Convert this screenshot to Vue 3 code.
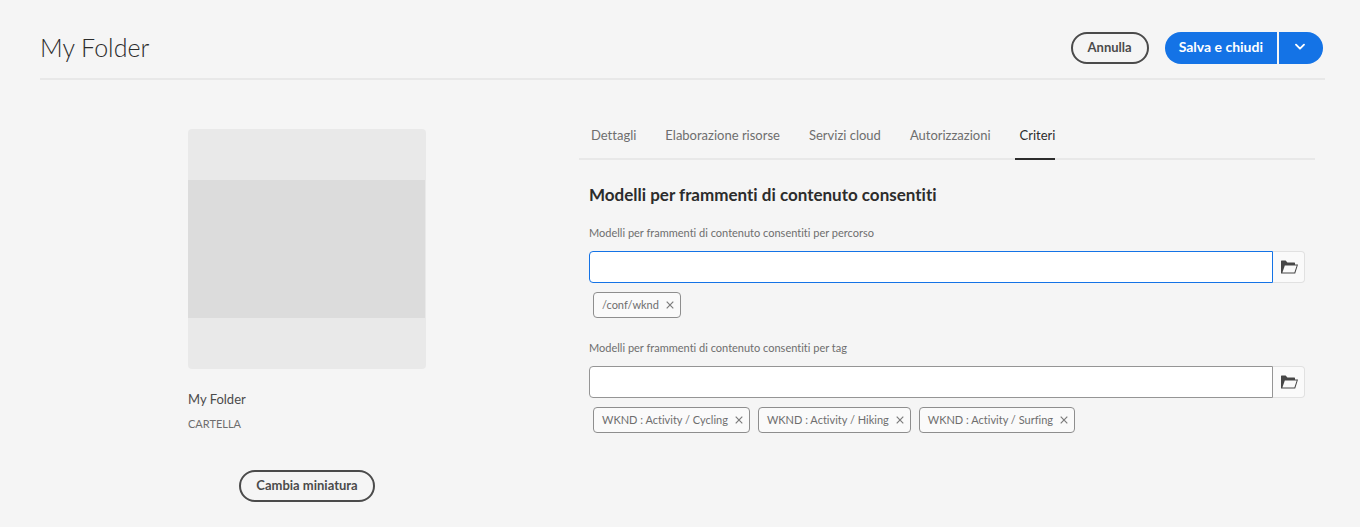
<script setup>
import { ref } from 'vue'

const tabs = ['Dettagli', 'Elaborazione risorse', 'Servizi cloud', 'Autorizzazioni', 'Criteri']
const activeTab = ref('Criteri')

const fields = ref([
  {
    id: 'policy-path',
    label: 'Modelli per frammenti di contenuto consentiti per percorso',
    active: true,
    value: '',
    tags: ['/conf/wknd'],
  },
  {
    id: 'policy-tag',
    label: 'Modelli per frammenti di contenuto consentiti per tag',
    active: false,
    value: '',
    tags: ['WKND : Activity / Cycling', 'WKND : Activity / Hiking', 'WKND : Activity / Surfing'],
  },
])

function removeTag(field, tag) {
  field.tags = field.tags.filter((t) => t !== tag)
}
</script>

<template>
  <div class="page">
    <header class="header">
      <h1 class="title">My Folder</h1>
      <div class="actions">
        <button type="button" class="btn btn-outline">Annulla</button>
        <div class="split">
          <button type="button" class="btn btn-primary split-main">Salva e chiudi</button>
          <button type="button" class="btn btn-primary split-menu" aria-label="Altre opzioni">
            <svg width="12" height="8" viewBox="0 0 12 8" aria-hidden="true">
              <path d="M2 1.7 6 5.7 10 1.7" fill="none" stroke="#fff" stroke-width="1.9" stroke-linecap="round" stroke-linejoin="round" />
            </svg>
          </button>
        </div>
      </div>
    </header>

    <main class="content">
      <section class="preview">
        <div class="card">
          <div class="thumb"><div class="thumb-image"></div></div>
          <p class="name">My Folder</p>
          <p class="kind">CARTELLA</p>
          <button type="button" class="btn btn-outline change">Cambia miniatura</button>
        </div>
      </section>

      <section class="details">
        <div class="tabs" role="tablist">
          <button
            v-for="tab in tabs"
            :key="tab"
            type="button"
            role="tab"
            class="tab"
            :class="{ selected: tab === activeTab }"
            :aria-selected="tab === activeTab"
            @click="activeTab = tab"
          >{{ tab }}</button>
        </div>

        <div class="panel">
          <h2 class="heading">Modelli per frammenti di contenuto consentiti</h2>
          <div v-for="field in fields" :key="field.id" class="field">
            <label class="label" :for="field.id">{{ field.label }}</label>
            <div class="picker">
              <input :id="field.id" v-model="field.value" type="text" class="input" :class="{ active: field.active }" />
              <button type="button" class="browse" aria-label="Sfoglia">
                <svg width="18" height="14" viewBox="0 0 18 14" aria-hidden="true">
                  <path d="M1 13.4V1Q1 0.4 1.6 0.4H5.6L7.4 2.4H14.4Q15 2.4 15 3V4.6H18L15.2 13.4Z" fill="#464646" />
                  <path d="M4.8 5.5H16.7L14.4 12.4H2.4Z" fill="#fafafa" />
                </svg>
              </button>
            </div>
            <ul class="tags">
              <li v-for="tag in field.tags" :key="tag" class="tag">
                <span>{{ tag }}</span>
                <button type="button" class="remove" :aria-label="'Rimuovi ' + tag" @click="removeTag(field, tag)">
                  <svg width="8" height="8" viewBox="0 0 8 8" aria-hidden="true">
                    <path d="M0.7 0.7 7.3 7.3M7.3 0.7 0.7 7.3" stroke="#7c7c7c" stroke-width="1.2" />
                  </svg>
                </button>
              </li>
            </ul>
          </div>
        </div>
      </section>
    </main>
  </div>
</template>

<style>
html,
body {
  background: #f5f5f5;
}
</style>

<style scoped>
.page {
  min-height: 100vh;
  box-sizing: border-box;
  background: #f5f5f5;
  color: #4b4b4b;
  font-family: "Lato", "Noto Sans", sans-serif;
  font-size: 13px;
  font-variant-ligatures: none;
}
.page * {
  box-sizing: border-box;
}
button,
input {
  font-family: inherit;
  font-variant-ligatures: inherit;
  margin: 0;
}
button {
  cursor: pointer;
}
.header {
  display: flex;
  align-items: center;
  justify-content: space-between;
  margin: 0 35px 0 40px;
  padding: 32px 2px 14px 0;
  border-bottom: 2px solid #e8e8e8;
}
.title {
  margin: 0;
  padding-bottom: 2px;
  font-size: 25px;
  line-height: 30px;
  font-weight: 300;
  color: #2c2c2c;
}
.actions {
  display: flex;
  gap: 16px;
}
.btn {
  height: 32px;
  padding: 0 15px 2px;
  border: 2px solid #4b4b4b;
  border-radius: 16px;
  background: transparent;
  color: #4b4b4b;
  font-size: 13px;
  line-height: 16px;
  font-weight: 700;
}
.split {
  display: flex;
  gap: 2px;
}
.btn-primary {
  border: 0;
  background: #1473e6;
  color: #fff;
}
.split-main {
  padding: 0 14px 2px;
  border-radius: 16px 0 0 16px;
  font-size: 14px;
}
.split-menu {
  display: flex;
  align-items: center;
  justify-content: center;
  width: 44px;
  padding: 0 2px 2px 0;
  border-radius: 0 16px 16px 0;
}
.content {
  display: grid;
  grid-template-columns: 534fr 736fr;
  column-gap: 5px;
  margin: 0 45px 0 40px;
}
.preview {
  display: flex;
  justify-content: center;
  padding-top: 49px;
}
.card {
  display: flex;
  flex-direction: column;
  width: 238px;
}
.thumb {
  display: flex;
  align-items: center;
  height: 240px;
  border-radius: 4px;
  background: #e9e9e9;
}
.thumb-image {
  flex: 1;
  height: 138px;
  margin-right: 1px;
  background: #dcdcdc;
}
.name {
  margin: 20px 0 0;
  line-height: 20px;
  font-size: 13px;
}
.kind {
  margin: 8px 0 0;
  font-size: 11px;
  line-height: 14px;
  color: #6e6e6e;
}
.change {
  align-self: center;
  margin-top: 39px;
}
.details {
  min-width: 0;
  padding-top: 32px;
}
.tabs {
  display: flex;
  gap: 24px;
  padding-left: 7px;
  border-bottom: 2px solid #e8e8e8;
}
.tab {
  height: 48px;
  margin-bottom: -2px;
  padding: 0 0 0 5px;
  border: 0;
  border-bottom: 2px solid transparent;
  background: none;
  color: #6e6e6e;
  font-size: 13px;
  line-height: 46px;
}
.tab.selected {
  border-bottom-color: #2c2c2c;
  color: #2c2c2c;
}
.panel {
  padding: 0 10px;
}
.heading {
  margin: 23px 0 0;
  font-size: 17px;
  line-height: 24px;
  font-weight: 700;
  color: #2c2c2c;
}
.field {
  margin-top: 18px;
}
.field + .field {
  margin-top: 22px;
}
.label {
  display: block;
  height: 26px;
  font-size: 11px;
  line-height: 16px;
  color: #6e6e6e;
}
.picker {
  display: flex;
}
.input {
  flex: 1;
  min-width: 0;
  height: 32px;
  padding: 0 12px;
  border: 1px solid #959595;
  border-radius: 4px 0 0 4px;
  background: #fff;
  font-size: 13px;
  outline: none;
}
.input.active {
  border-color: #1473e6;
}
.browse {
  display: flex;
  align-items: center;
  justify-content: center;
  width: 32px;
  height: 32px;
  padding: 0;
  border: 1px solid #e1e1e1;
  border-left: 0;
  border-radius: 0 4px 4px 0;
  background: #fafafa;
}
.tags {
  display: flex;
  flex-wrap: wrap;
  gap: 8px;
  margin: 9px 0 0;
  padding: 0 4px;
  list-style: none;
}
.tag {
  display: flex;
  align-items: center;
  height: 26px;
  padding: 0 6px 0 8px;
  border: 1px solid #8e8e8e;
  border-radius: 4px;
  background: #fafafa;
  color: #6e6e6e;
  font-size: 11px;
  line-height: 16px;
}
.remove {
  display: flex;
  margin-left: 7px;
  padding: 0;
  border: 0;
  background: none;
}
</style>
